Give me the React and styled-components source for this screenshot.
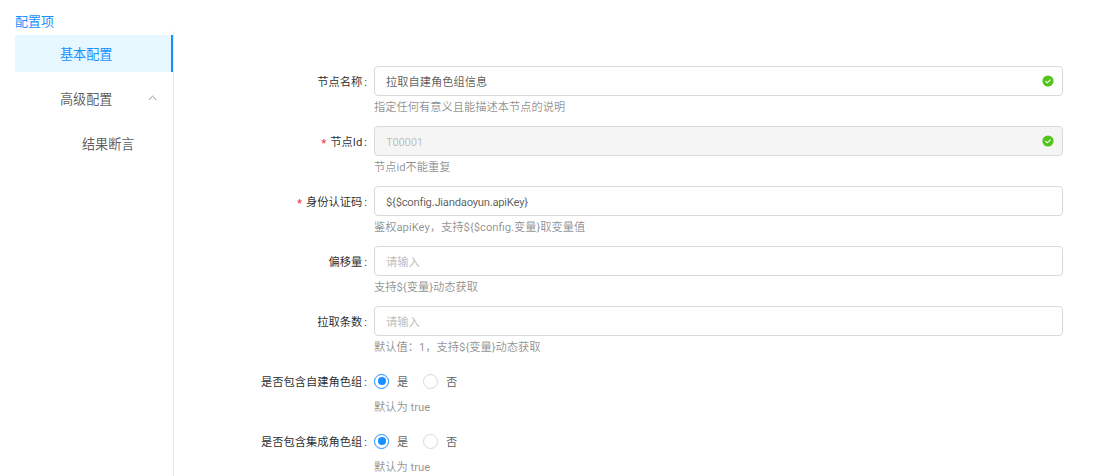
import React from 'react';
import styled, { createGlobalStyle } from 'styled-components';

const GlobalStyle = createGlobalStyle`
  html, body {
    margin: 0;
    padding: 0;
    background: #fff;
    overflow: hidden;
  }
  body {
    font-family: Roboto, "Noto Sans CJK SC", sans-serif;
    font-size: 11.25px;
    color: rgba(0, 0, 0, 0.85);
  }
`;

const Page = styled.div`
  width: 1102px;
  height: 476px;
  overflow: hidden;
`;

const Title = styled.div`
  height: 31px;
  padding: 13px 0 0 15px;
  box-sizing: border-box;
  font-size: 13px;
  line-height: 17px;
  color: #1890ff;
`;

const Body = styled.div`
  display: flex;
`;

const Sidebar = styled.div`
  width: 159px;
  margin-left: 15px;
  padding-top: 4px;
  height: 445px;
  box-sizing: border-box;
  border-right: 1px solid #e8e8e8;
  flex-shrink: 0;
`;

const MenuItem = styled.div`
  position: relative;
  height: 37px;
  line-height: 39px;
  margin-bottom: 8px;
  padding-left: ${p => p.$indent || 45}px;
  font-size: 13.125px;
  color: ${p => (p.$active ? '#1890ff' : 'rgba(0, 0, 0, 0.65)')};
  background: ${p => (p.$active ? '#e6f7ff' : 'transparent')};
  border-right: ${p => (p.$active ? '2px solid #1890ff' : 'none')};
`;

const Arrow = styled.svg`
  position: absolute;
  left: 133px;
  top: 15px;
  width: 9px;
  height: 6px;
`;

const Form = styled.div`
  flex: 1;
  padding-top: 35px;
`;

const Row = styled.div`
  display: flex;
  height: 60px;
`;

const Label = styled.div`
  width: 200px;
  height: 30px;
  line-height: 33px;
  text-align: right;
  box-sizing: border-box;
  color: rgba(0, 0, 0, 0.85);
  flex-shrink: 0;
`;

const Star = styled.span`
  color: #f5222d;
  margin-right: 4px;
  font-family: "Liberation Sans", sans-serif;
  font-size: 13px;
  vertical-align: -2px;
`;

const Colon = styled.span`
  margin: 0 7px 0 2px;
`;

const Field = styled.div`
  width: 689px;
`;

const InputBox = styled.div`
  position: relative;
  height: 30px;
  box-sizing: border-box;
  border: 1px solid #d9d9d9;
  border-radius: 4px;
  padding: 0 11px;
  line-height: 31px;
  letter-spacing: ${p => (p.$latin ? '-0.25px' : '0')};
  background: ${p => (p.$disabled ? '#f5f5f5' : '#fff')};
  color: ${p => {
    if (p.$disabled) return 'rgba(0, 0, 0, 0.25)';
    if (p.$placeholder) return '#bfbfbf';
    return 'rgba(0, 0, 0, 0.65)';
  }};
`;

const CheckIcon = styled.svg`
  position: absolute;
  right: 8px;
  top: 8px;
  width: 12px;
  height: 12px;
`;

const Help = styled.div`
  height: 20px;
  line-height: 23px;
  color: rgba(0, 0, 0, 0.45);
`;

const RadioRow = styled.div`
  display: flex;
  align-items: center;
  height: 30px;
`;

const RadioItem = styled.div`
  display: flex;
  align-items: center;
  width: 49px;
  color: rgba(0, 0, 0, 0.65);
`;

const Dot = styled.span`
  position: relative;
  width: 15px;
  height: 15px;
  box-sizing: border-box;
  border-radius: 50%;
  border: 1px solid ${p => (p.$checked ? '#1890ff' : '#d9d9d9')};
  margin-right: 8px;
  &::after {
    content: '';
    display: ${p => (p.$checked ? 'block' : 'none')};
    position: absolute;
    left: 2.5px;
    top: 2.5px;
    width: 8px;
    height: 8px;
    border-radius: 50%;
    background: #1890ff;
  }
`;

const Valid = () => (
  <CheckIcon viewBox="0 0 12 12">
    <circle cx="6" cy="6" r="5.6" fill="#52c41a" />
    <path d="M3.4 6.1 5.2 7.8 8.6 4.6" fill="none" stroke="#fff" strokeWidth="1.1" />
  </CheckIcon>
);

const inputs = [
  { label: '节点名称', value: '拉取自建角色组信息', help: '指定任何有意义且能描述本节点的说明', valid: true },
  { label: '节点Id', required: true, value: 'T00001', latin: true, disabled: true, help: '节点id不能重复', valid: true },
  { label: '身份认证码', required: true, value: '${$config.Jiandaoyun.apiKey}', latin: true, help: '鉴权apiKey，支持${$config.变量}取变量值' },
  { label: '偏移量', value: '请输入', placeholder: true, help: '支持${变量}动态获取' },
  { label: '拉取条数', value: '请输入', placeholder: true, help: '默认值：1，支持${变量}动态获取' },
];

const radios = ['是否包含自建角色组', '是否包含集成角色组'];

export default function App() {
  return (
    <Page>
      <GlobalStyle />
      <Title>配置项</Title>
      <Body>
        <Sidebar>
          <MenuItem $active>基本配置</MenuItem>
          <MenuItem>
            高级配置
            <Arrow viewBox="0 0 9 6">
              <path d="M.8 4.8 4.5 1.2 8.2 4.8" fill="none" stroke="#8c8c8c" strokeWidth="1" />
            </Arrow>
          </MenuItem>
          <MenuItem $indent={67}>结果断言</MenuItem>
        </Sidebar>
        <Form>
          {inputs.map(item => (
            <Row key={item.label}>
              <Label>
                {item.required && <Star>*</Star>}
                {item.label}
                <Colon>:</Colon>
              </Label>
              <Field>
                <InputBox $disabled={item.disabled} $placeholder={item.placeholder} $latin={item.latin}>
                  {item.value}
                  {item.valid && <Valid />}
                </InputBox>
                <Help>{item.help}</Help>
              </Field>
            </Row>
          ))}
          {radios.map(label => (
            <Row key={label}>
              <Label>
                {label}
                <Colon>:</Colon>
              </Label>
              <Field>
                <RadioRow>
                  <RadioItem>
                    <Dot $checked />是
                  </RadioItem>
                  <RadioItem>
                    <Dot />否
                  </RadioItem>
                </RadioRow>
                <Help>默认为 true</Help>
              </Field>
            </Row>
          ))}
        </Form>
      </Body>
    </Page>
  );
}
